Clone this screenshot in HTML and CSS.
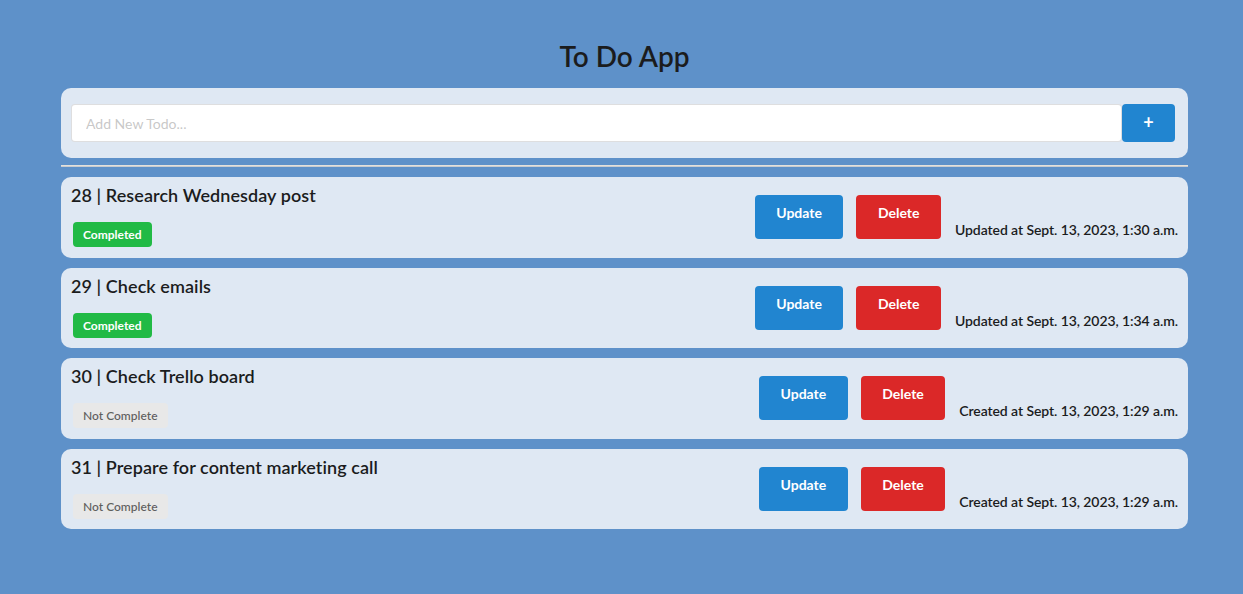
FILE: index.html
```html
<!DOCTYPE html>
<html lang="en">
<head>
<meta charset="utf-8">
<title>To Do App</title>
<link rel="stylesheet" href="styles.css">
</head>
<body>
<div class="container">
  <h1 class="app-title">To Do App</h1>
  <form class="segment add-form">
    <input class="add-input" type="text" placeholder="Add New Todo...">
    <button class="add-btn" type="button">+</button>
  </form>
  <hr class="divider">
  <div class="todo-list">
    <div class="segment todo">
      <div class="todo-main">
        <h3 class="todo-title">28 | Research Wednesday post</h3>
        <span class="label label-done">Completed</span>
      </div>
      <div class="todo-side">
        <button class="btn btn-blue" type="button">Update</button>
        <button class="btn btn-red" type="button">Delete</button>
        <span class="stamp">Updated at Sept. 13, 2023, 1:30 a.m.</span>
      </div>
    </div>
    <div class="segment todo">
      <div class="todo-main">
        <h3 class="todo-title">29 | Check emails</h3>
        <span class="label label-done">Completed</span>
      </div>
      <div class="todo-side">
        <button class="btn btn-blue" type="button">Update</button>
        <button class="btn btn-red" type="button">Delete</button>
        <span class="stamp">Updated at Sept. 13, 2023, 1:34 a.m.</span>
      </div>
    </div>
    <div class="segment todo">
      <div class="todo-main">
        <h3 class="todo-title">30 | Check Trello board</h3>
        <span class="label label-todo">Not Complete</span>
      </div>
      <div class="todo-side">
        <button class="btn btn-blue" type="button">Update</button>
        <button class="btn btn-red" type="button">Delete</button>
        <span class="stamp">Created at Sept. 13, 2023, 1:29 a.m.</span>
      </div>
    </div>
    <div class="segment todo">
      <div class="todo-main">
        <h3 class="todo-title">31 | Prepare for content marketing call</h3>
        <span class="label label-todo">Not Complete</span>
      </div>
      <div class="todo-side">
        <button class="btn btn-blue" type="button">Update</button>
        <button class="btn btn-red" type="button">Delete</button>
        <span class="stamp">Created at Sept. 13, 2023, 1:29 a.m.</span>
      </div>
    </div>
  </div>
</div>
</body>
</html>
```

FILE: styles.css
```css
* { box-sizing: border-box; }

html, body {
  margin: 0;
  padding: 0;
}

body {
  background: #5e91c9;
  font-family: Lato, "Noto Sans", "Liberation Sans", sans-serif;
  font-size: 14px;
  color: rgba(0, 0, 0, 0.87);
}

.container {
  width: 1127px;
  margin-left: 61px;
  padding-top: 38px;
}

.app-title {
  margin: 0 0 14px;
  font-size: 28px;
  line-height: 36px;
  font-weight: 600;
  text-align: center;
  color: #1b1c1d;
}

.segment {
  background: #dfe8f3;
  border-radius: 10px;
}

.add-form {
  display: flex;
  margin: 0;
  padding: 16px 13px 16px 10px;
}

.add-input {
  flex: 1;
  height: 38px;
  margin: 0;
  padding: 0 14px;
  border: 1px solid rgba(34, 36, 38, 0.15);
  border-radius: 4px;
  background: #fff;
  font-family: inherit;
  font-size: 14px;
  color: rgba(0, 0, 0, 0.87);
  outline: none;
}

.add-input::placeholder {
  color: rgba(191, 191, 191, 0.87);
}

.add-btn {
  width: 53px;
  height: 38px;
  margin: 0;
  border: 0;
  border-radius: 4px;
  background: #2185d0;
  color: #fff;
  font-family: inherit;
  font-size: 18px;
  font-weight: 700;
  line-height: 1;
  padding: 0 0 2px;
}

.divider {
  height: 0;
  margin: 7px 0 10px;
  border: 0;
  border-top: 1px solid #e3e1dc;
  border-bottom: 1px solid #c9ccd0;
}

.todo-list {
  display: flex;
  flex-direction: column;
  gap: 10px;
}

.todo {
  display: flex;
  justify-content: space-between;
  align-items: flex-start;
  padding: 7px 10px 11px 10px;
  height: 80.5px;
}

.todo-main {
  display: flex;
  flex-direction: column;
  align-items: flex-start;
}

.todo-title {
  margin: 0;
  font-size: 18px;
  line-height: 23px;
  font-weight: 600;
  letter-spacing: 0.07px;
  color: #1b1c1d;
}

.label {
  display: inline-block;
  margin: 15px 0 0 2px;
  height: 25px;
  line-height: 25px;
  padding: 0 10px;
  border-radius: 4px;
  font-size: 12px;
  font-weight: 700;
}

.label-done {
  background: #21ba45;
  color: #fff;
}

.label-todo {
  background: #e8e8e8;
  color: rgba(0, 0, 0, 0.6);
  font-weight: 600;
}

.todo-side {
  display: flex;
  align-items: flex-end;
  margin-top: 11px;
}

.btn {
  height: 44px;
  margin: 0 13px 0 0;
  padding: 0 21.5px 9px;
  border: 0;
  border-radius: 4px;
  font-family: inherit;
  font-size: 14px;
  font-weight: 700;
  line-height: normal;
  color: #fff;
  vertical-align: top;
}

.btn-red {
  margin-right: 14px;
}

.btn-blue { background: #2185d0; }
.btn-red { background: #db2828; }

.stamp {
  font-size: 14px;
  line-height: 19px;
  font-weight: 600;
  letter-spacing: -0.08px;
  color: #1b1c1d;
}
```
